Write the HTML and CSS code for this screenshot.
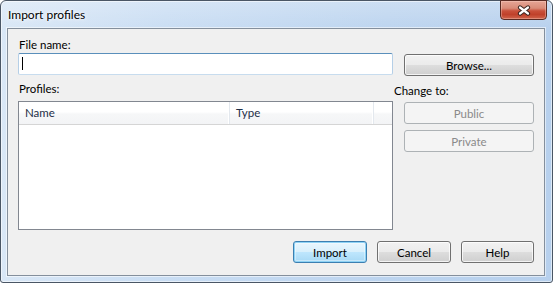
FILE: index.html
```html
<!DOCTYPE html>
<html>
<head>
<meta charset="utf-8">
<title>Import profiles</title>
<link rel="stylesheet" href="styles.css">
</head>
<body>
<div class="window">
  <div class="titlebar">
    <span class="title">Import profiles</span>
    <button class="close" aria-label="Close">
      <svg width="14" height="11" viewBox="0 0 14 11">
        <path d="M3 2.5 L11 8.5 M11 2.5 L3 8.5" stroke="#3a2520" stroke-width="4.2" stroke-linecap="round" fill="none"/>
        <path d="M3 2.5 L11 8.5 M11 2.5 L3 8.5" stroke="#ffffff" stroke-width="2.2" stroke-linecap="round" fill="none"/>
      </svg>
    </button>
  </div>
  <div class="client">
    <div class="lbl lbl-file">File name:</div>
    <div class="row-file">
      <div class="textbox"><span class="caret"></span></div>
      <button class="btn btn-browse">Browse...</button>
    </div>
    <div class="row-main">
      <div class="col-left">
        <div class="lbl lbl-profiles">Profiles:</div>
        <div class="listbox">
          <div class="lv-header">
            <div class="lv-col lv-name">Name</div>
            <div class="lv-col lv-type">Type</div>
            <div class="lv-col lv-rest"></div>
          </div>
        </div>
      </div>
      <div class="col-right">
        <div class="lbl lbl-change">Change to:</div>
        <button class="btn btn-side btn-public" disabled>Public</button>
        <button class="btn btn-side btn-private" disabled>Private</button>
      </div>
    </div>
    <div class="footer">
      <button class="btn btn-default btn-foot">Import</button>
      <button class="btn btn-foot">Cancel</button>
      <button class="btn btn-foot btn-help">Help</button>
    </div>
  </div>
</div>
</body>
</html>
```
FILE: styles.css
```css
* { box-sizing: border-box; }
html, body { margin: 0; padding: 0; }
body {
  width: 553px;
  height: 283px;
  overflow: hidden;
  background: #ffffff;
  font-family: Lato, "Noto Sans", sans-serif;
  font-size: 11.5px;
  color: #000;
}
.window {
  width: 553px;
  height: 283px;
  border: 1px solid #4a5665;
  border-radius: 6px 6px 3px 3px;
  background:
    linear-gradient(to bottom, rgba(255,255,255,0.25), rgba(255,255,255,0) 30px),
    linear-gradient(to right, #d9e7f6 0%, #c9ddf3 30%, #bcd4ef 70%, #b7d0ed 100%);
  box-shadow: inset 0 0 0 1px rgba(255,255,255,0.55);
  display: flex;
  flex-direction: column;
}
.titlebar {
  height: 27px;
  flex: none;
  display: flex;
  align-items: flex-start;
  justify-content: space-between;
  padding-left: 7px;
}
.title {
  font-size: 12px;
  line-height: 14px;
  margin-top: 7px;
  color: #000;
  text-shadow: 0 0 5px #ffffff, 0 0 3px rgba(255,255,255,0.9);
}
.close {
  width: 47px;
  height: 20px;
  margin-top: -1px;
  margin-right: 5px;
  padding: 0;
  border: 1px solid #5a2a22;
  border-radius: 0 0 4px 4px;
  background: linear-gradient(to bottom, #e6a596 0%, #d98b78 40%, #c9503a 55%, #c0412b 75%, #d0644c 100%);
  box-shadow: inset 0 0 0 1px rgba(255,220,210,0.35);
  display: flex;
  align-items: center;
  justify-content: center;
}
.close svg { display: block; }
.client {
  flex: 1;
  margin: 0 7px 6px 6px;
  border: 1px solid #848f9c;
  background: #f0f0f0;
  box-shadow: 0 0 0 1px rgba(255,255,255,0.55);
  padding: 8px 10px 0 10px;
  display: flex;
  flex-direction: column;
}
.lbl {
  line-height: 15px;
  height: 15px;
  white-space: nowrap;
}
.lbl-file { padding-left: 1px; }
.row-file {
  margin-top: 1px;
  display: flex;
  align-items: flex-start;
  gap: 11px;
}
.textbox {
  width: 375px;
  height: 22px;
  background: #fff;
  border: 1px solid;
  border-color: #5a8fbb #b5cfe7 #c7dcee #b5cfe7;
  border-radius: 2px;
  padding: 3px 0 0 3px;
}
.caret {
  display: block;
  width: 1px;
  height: 13px;
  background: #000;
}
.btn {
  height: 22px;
  padding: 0;
  font: inherit;
  color: #000;
  border: 1px solid #707070;
  border-radius: 3px;
  background: linear-gradient(to bottom, #f2f2f2 0%, #ebebeb 48%, #dddddd 52%, #cfcfcf 100%);
  box-shadow: inset 0 0 0 1px rgba(255,255,255,0.75);
  text-align: center;
}
.btn-browse {
  width: 130px;
  margin-top: 1px;
}
.row-main {
  display: flex;
  gap: 11px;
  align-items: flex-start;
}
.col-left {
  width: 375px;
  display: flex;
  flex-direction: column;
}
.lbl-profiles { margin-top: 5px; padding-left: 1px; }
.listbox {
  margin-top: 5px;
  height: 129px;
  background: #fff;
  border: 1px solid #828790;
}
.lv-header {
  height: 23px;
  display: flex;
  border-bottom: 1px solid #d5d5d5;
  background: linear-gradient(to bottom, #ffffff 0%, #ffffff 45%, #f6f7f8 55%, #f3f4f6 100%);
}
.lv-col {
  height: 22px;
  line-height: 22px;
  color: #1e2f48;
  padding-left: 6px;
  border-right: 1px solid #e3e8ee;
  box-shadow: inset -1px 0 0 #ffffff;
}
.lv-name { width: 211px; }
.lv-type { width: 144px; }
.lv-rest { flex: 1; border-right: none; box-shadow: none; }
.col-right {
  width: 130px;
  display: flex;
  flex-direction: column;
}
.lbl-change { margin-top: 7px; padding-left: 0; margin-left: -10px; }
.btn-side {
  width: 130px;
  border-color: #adb2b5;
  background: #f4f4f4;
  box-shadow: none;
  color: #8a8a8a;
}
.btn-public { margin-top: 4px; }
.btn-private { margin-top: 6px; }
.footer {
  margin-top: 11px;
  display: flex;
  justify-content: flex-end;
  gap: 10px;
}
.btn-foot { width: 74px; }
.btn-help { width: 73px; }
.btn-default {
  border-color: #3c7fb1;
  background: linear-gradient(to bottom, #eaf6fd 0%, #d9f0fc 48%, #bee6fd 52%, #a7d9f5 100%);
  box-shadow: inset 0 0 0 1px #8fd3f5, inset 0 0 0 2px rgba(255,255,255,0.35);
}
```
